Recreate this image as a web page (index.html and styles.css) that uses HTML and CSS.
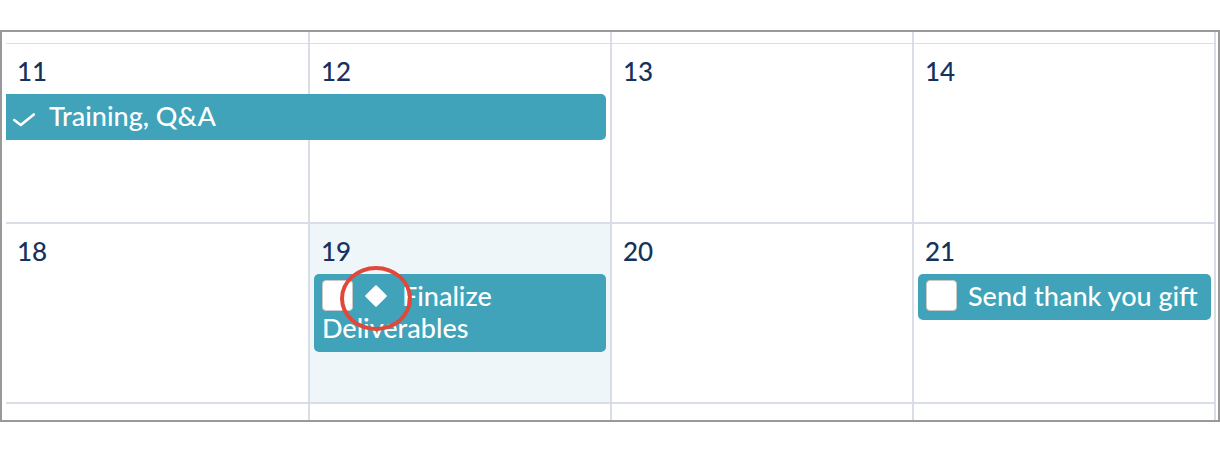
FILE: index.html
```html
<!DOCTYPE html>
<html lang="en">
<head>
    <meta charset="UTF-8">
    <title>Calendar</title>
    <link rel="stylesheet" href="styles.css">
</head>
<body>
    <div class="frame">
        <div class="calendar">
            <!-- tail of the previous week -->
            <div class="week week-partial">
                <div class="day"></div>
                <div class="day"></div>
                <div class="day"></div>
                <div class="day"></div>
            </div>

            <div class="week">
                <div class="day col-1"><span class="date">11</span></div>
                <div class="day col-2"><span class="date">12</span></div>
                <div class="day col-3"><span class="date">13</span></div>
                <div class="day col-4"><span class="date">14</span></div>
                <div class="event event-continued span-1-2">
                    <svg class="check" width="22" height="14" viewBox="0 0 22 14">
                        <polyline points="1.2,7 7.8,12 20.8,1.5" fill="none" stroke="#fff" stroke-width="2.6" stroke-linecap="round" stroke-linejoin="round"/>
                    </svg><span>Training, Q&amp;A</span>
                </div>
            </div>

            <div class="week">
                <div class="day col-1"><span class="date">18</span></div>
                <div class="day col-2 selected"><span class="date">19</span></div>
                <div class="day col-3"><span class="date">20</span></div>
                <div class="day col-4"><span class="date">21</span></div>
                <div class="event col-2">
                    <span class="box"></span><svg class="milestone" width="24" height="24" viewBox="0 0 24 24">
                        <path d="M12 2.2 L21.8 12 L12 21.8 L2.2 12 Z" fill="#fff" stroke="#fff" stroke-width="2" stroke-linejoin="round"/>
                    </svg>Finalize Deliverables
                    <span class="highlight-ring"></span>
                </div>
                <div class="event event-last col-4">
                    <span class="box"></span>Send thank you gift
                </div>
            </div>

            <div class="week week-partial">
                <div class="day"></div>
                <div class="day"></div>
                <div class="day"></div>
                <div class="day"></div>
            </div>
        </div>
    </div>
</body>
</html>
```

FILE: styles.css
```css
body {
    margin: 0;
    padding: 30px 0 0;
    background-color: #fff;
    font-family: 'Lato', 'Open Sans', sans-serif;
}

.frame {
    width: 1220px;
    height: 392px;
    box-sizing: border-box;
    border: 2px solid #999;
    padding: 0 2px 0 4px;
    overflow: hidden;
}

.calendar {
    display: flex;
    flex-direction: column;
    gap: 2px;
    background-color: #d8dde6;
    border-right: 2px solid #d8dde6;
}

.week {
    display: grid;
    grid-template-columns: 302px 300px 300px 1fr;
    grid-template-rows: 50px auto 1fr;
    column-gap: 2px;
    height: 178px;
}

.week-partial {
    height: 10px;
    grid-template-rows: 1fr;
}

.week-partial:last-child {
    height: 16px;
}

.day {
    grid-row: 1 / -1;
    background-color: #fff;
    padding: 11px 0 0 11px;
}

.day.selected {
    background-color: #eef6fa;
}

.col-1 { grid-column: 1; }
.col-2 { grid-column: 2; }
.col-3 { grid-column: 3; }
.col-4 { grid-column: 4; }
.span-1-2 { grid-column: 1 / 3; }

.date {
    display: block;
    font-size: 26px;
    font-weight: 500;
    line-height: 32px;
    color: #16325c;
}

.event {
    grid-row: 2;
    align-self: start;
    position: relative;
    z-index: 1;
    margin: 0 4px;
    padding: 6px 8px 8px;
    background-color: #40a3b9;
    border-radius: 5px;
    color: #fff;
    font-size: 27px;
    font-weight: 500;
    line-height: 32px;
}

.event-continued {
    margin-left: 0;
    padding-left: 7px;
    border-radius: 0 5px 5px 0;
}

.event-last {
    margin-right: 3px;
}

.check {
    vertical-align: -1px;
    margin-right: 14px;
}

.box {
    display: inline-block;
    width: 31px;
    height: 31px;
    box-sizing: border-box;
    background-color: #fff;
    border: 1px solid #c9c9c9;
    border-radius: 4px;
    vertical-align: -5px;
    margin-right: 11px;
}

.milestone {
    vertical-align: -2px;
    margin-right: 14px;
}

.highlight-ring {
    position: absolute;
    left: 26px;
    top: -8px;
    width: 72px;
    height: 65px;
    box-sizing: border-box;
    border: 4px solid #e1483a;
    border-radius: 50%;
}
```
